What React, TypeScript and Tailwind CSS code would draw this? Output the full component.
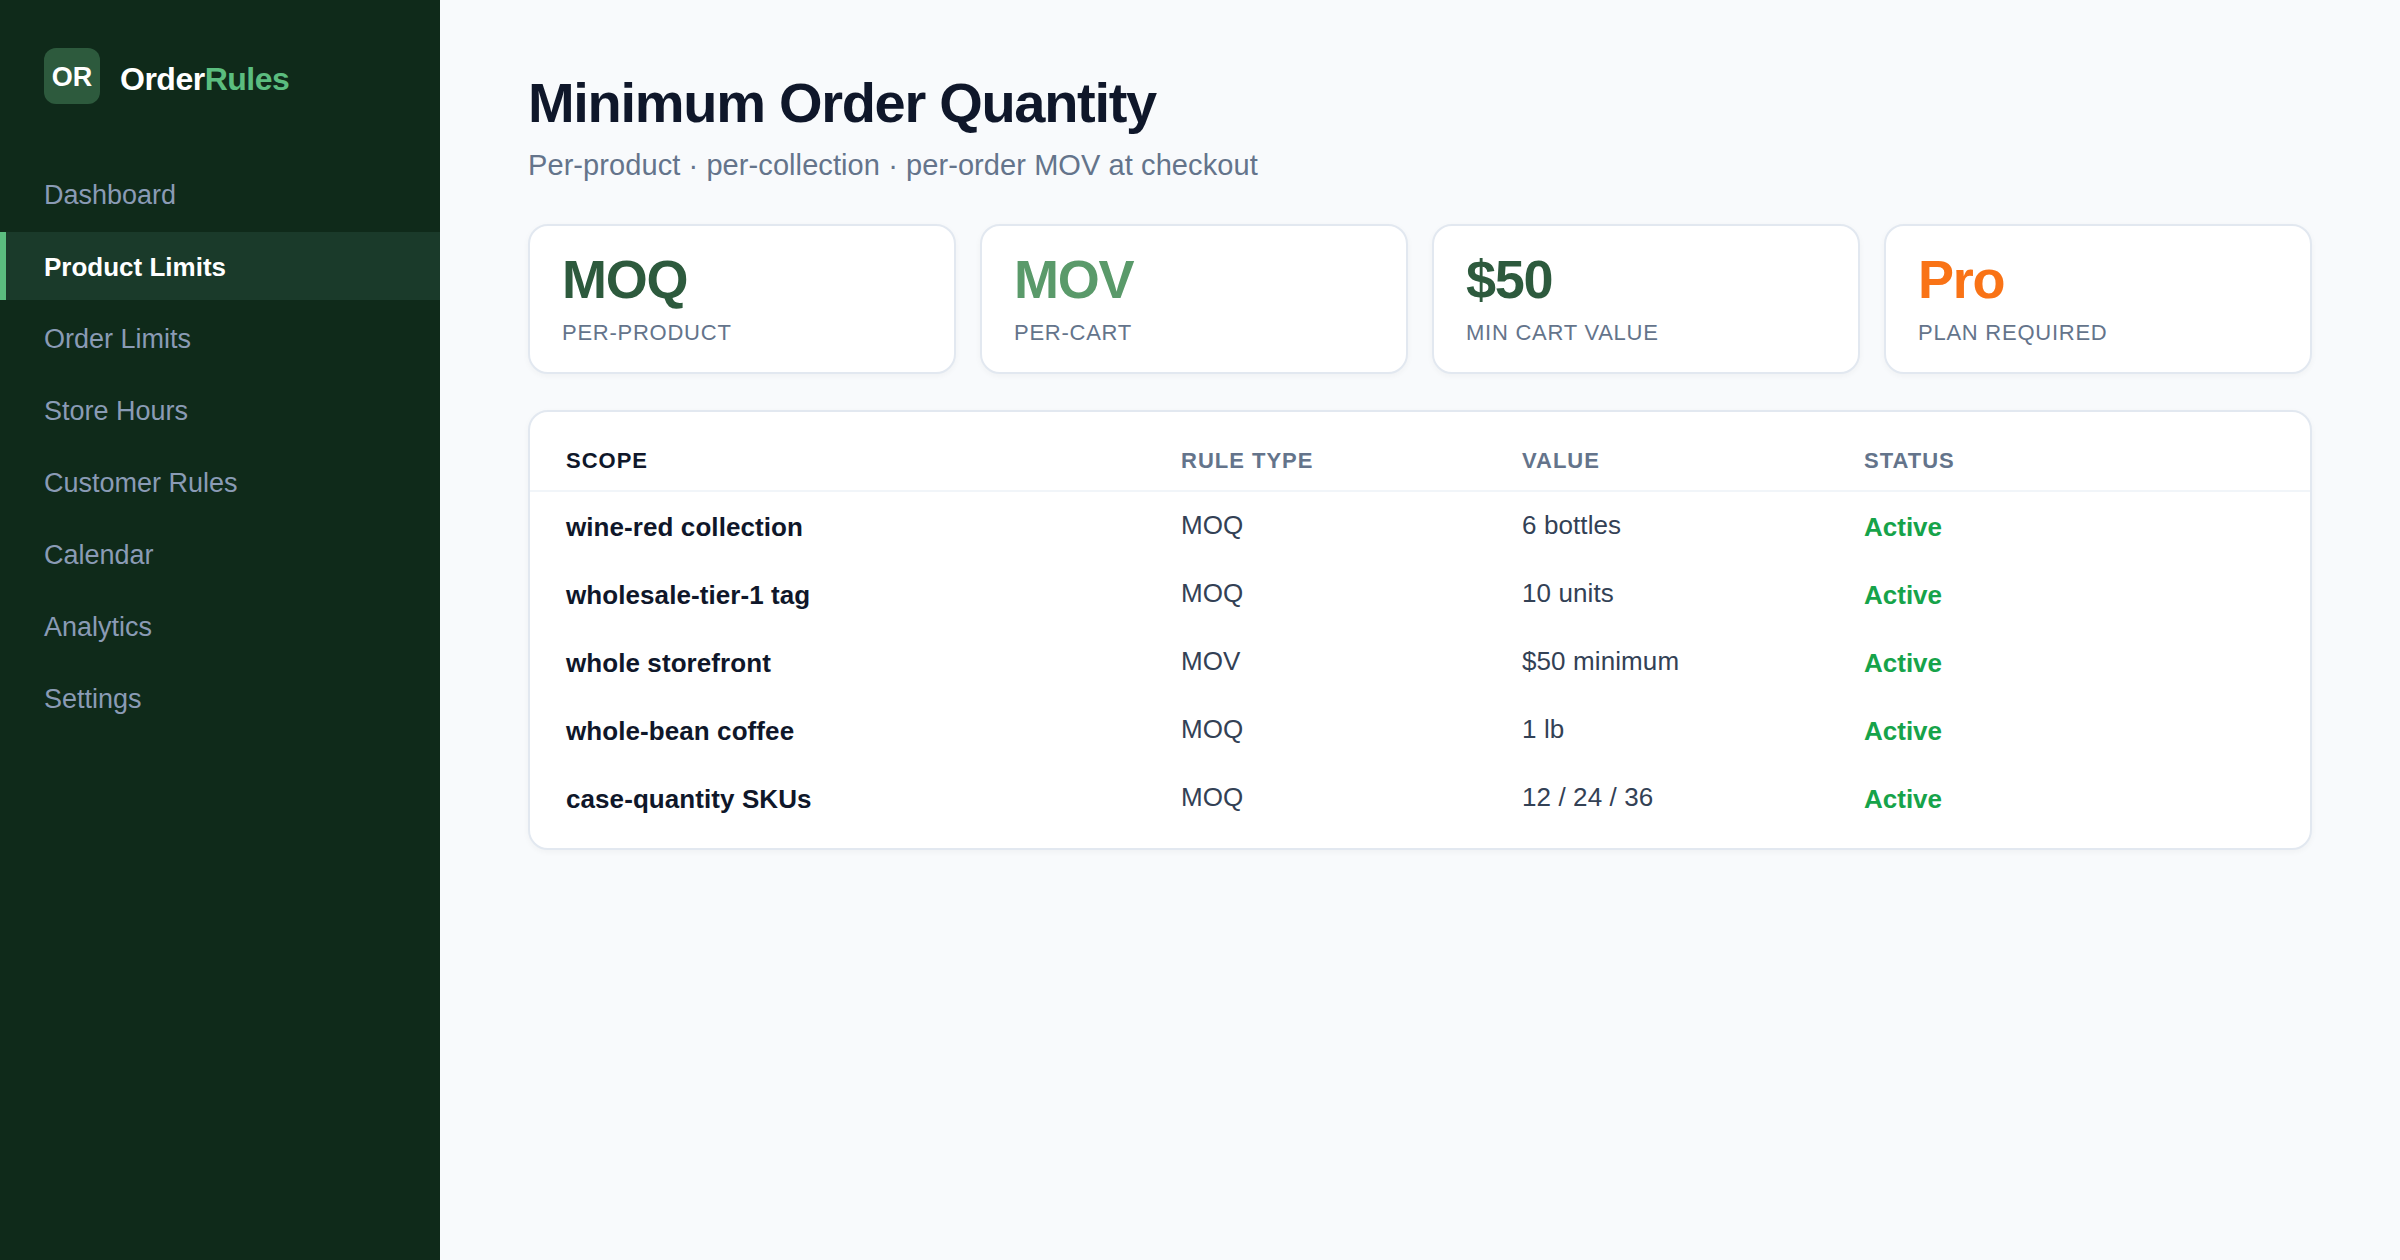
const navItems = ['Dashboard', 'Product Limits', 'Order Limits', 'Store Hours', 'Customer Rules', 'Calendar', 'Analytics', 'Settings'];

const stats = [
  { value: 'MOQ', label: 'PER-PRODUCT', color: 'text-[#2d5a3d]' },
  { value: 'MOV', label: 'PER-CART', color: 'text-[#5a9a6a]' },
  { value: '$50', label: 'MIN CART VALUE', color: 'text-[#2d5a3d]' },
  { value: 'Pro', label: 'PLAN REQUIRED', color: 'text-[#f97316]' },
];

const rules = [
  { scope: 'wine-red collection', type: 'MOQ', value: '6 bottles' },
  { scope: 'wholesale-tier-1 tag', type: 'MOQ', value: '10 units' },
  { scope: 'whole storefront', type: 'MOV', value: '$50 minimum' },
  { scope: 'whole-bean coffee', type: 'MOQ', value: '1 lb' },
  { scope: 'case-quantity SKUs', type: 'MOQ', value: '12 / 24 / 36' },
];

function Sidebar() {
  return (
    <aside className="w-[440px] shrink-0 bg-[#0f2a1a]">
      <div className="flex items-center gap-5 px-11 pt-12">
        <div className="flex h-14 w-14 items-center justify-center rounded-xl bg-[#2d5a3d] pt-0.5 text-[27px] font-bold text-white">OR</div>
        <div className="pt-1.5 text-[32px] font-bold tracking-[-0.5px] text-white">
          Order<span className="text-[#5bbd7f]">Rules</span>
        </div>
      </div>
      <nav className="mt-14 flex flex-col gap-1">
        {navItems.map((item) =>
          item === 'Product Limits' ? (
            <div key={item} className="flex h-[68px] items-center border-l-[6px] border-[#5bbd7f] bg-[#1a3a2a] pt-0.5 pl-[38px] text-[26px] font-bold text-white">
              {item}
            </div>
          ) : (
            <div key={item} className="flex h-[68px] items-center pt-0.5 pl-11 text-[27px] text-[#8a9bb5]">
              {item}
            </div>
          ),
        )}
      </nav>
    </aside>
  );
}

export default function App() {
  return (
    <div className="flex min-h-[1260px] bg-[#f8fafc] font-['Liberation_Sans',Arial,sans-serif]">
      <Sidebar />
      <main className="flex-1 px-[88px] pt-[67px]">
        <h1 className="text-[56px] leading-[72px] font-bold tracking-[-1.3px] text-[#0f172a]">Minimum Order Quantity</h1>
        <p className="mt-2 text-[29px] leading-[36px] tracking-[0.08px] text-[#64748b]">Per-product · per-collection · per-order MOV at checkout</p>

        <div className="mt-[41px] grid grid-cols-4 gap-6">
          {stats.map((stat) => (
            <div key={stat.label} className="h-[150px] rounded-[20px] border-2 border-[#e2e8f0] bg-white px-8 pt-[22px] shadow-[0_2px_6px_rgba(0,0,0,0.04)]">
              <div className={`text-[54px] leading-[62px] font-bold tracking-[-1.3px] ${stat.color}`}>{stat.value}</div>
              <div className="mt-[9px] text-[22px] leading-[28px] tracking-[0.75px] text-[#64748b]">{stat.label}</div>
            </div>
          ))}
        </div>

        <div className="mt-9 h-[440px] rounded-[20px] border-2 border-[#e2e8f0] bg-white shadow-[0_2px_6px_rgba(0,0,0,0.04)]">
          <table className="w-full table-fixed border-collapse text-left">
            <colgroup>
              <col className="w-[651px]" />
              <col className="w-[341px]" />
              <col className="w-[342px]" />
              <col />
            </colgroup>
            <thead>
              <tr className="h-[79px] border-b-2 border-[#f1f5f9] text-[22px] font-bold tracking-[1px] text-[#64748b]">
                <th className="pt-[19px] pl-9 text-[#0f172a]">SCOPE</th>
                <th className="pt-[19px]">RULE TYPE</th>
                <th className="pt-[19px]">VALUE</th>
                <th className="pt-[19px]">STATUS</th>
              </tr>
            </thead>
            <tbody>
              {rules.map((rule) => (
                <tr key={rule.scope} className="h-[68px]">
                  <td className="pt-1 pl-9 text-[26px] font-bold tracking-[0.08px] text-[#0f172a]">{rule.scope}</td>
                  <td className="text-[26px] tracking-[0.1px] text-[#334155]">{rule.type}</td>
                  <td className="text-[26px] tracking-[0.1px] text-[#334155]">{rule.value}</td>
                  <td className="pt-1 text-[26px] font-bold text-[#16a34a]">Active</td>
                </tr>
              ))}
            </tbody>
          </table>
        </div>
      </main>
    </div>
  );
}
